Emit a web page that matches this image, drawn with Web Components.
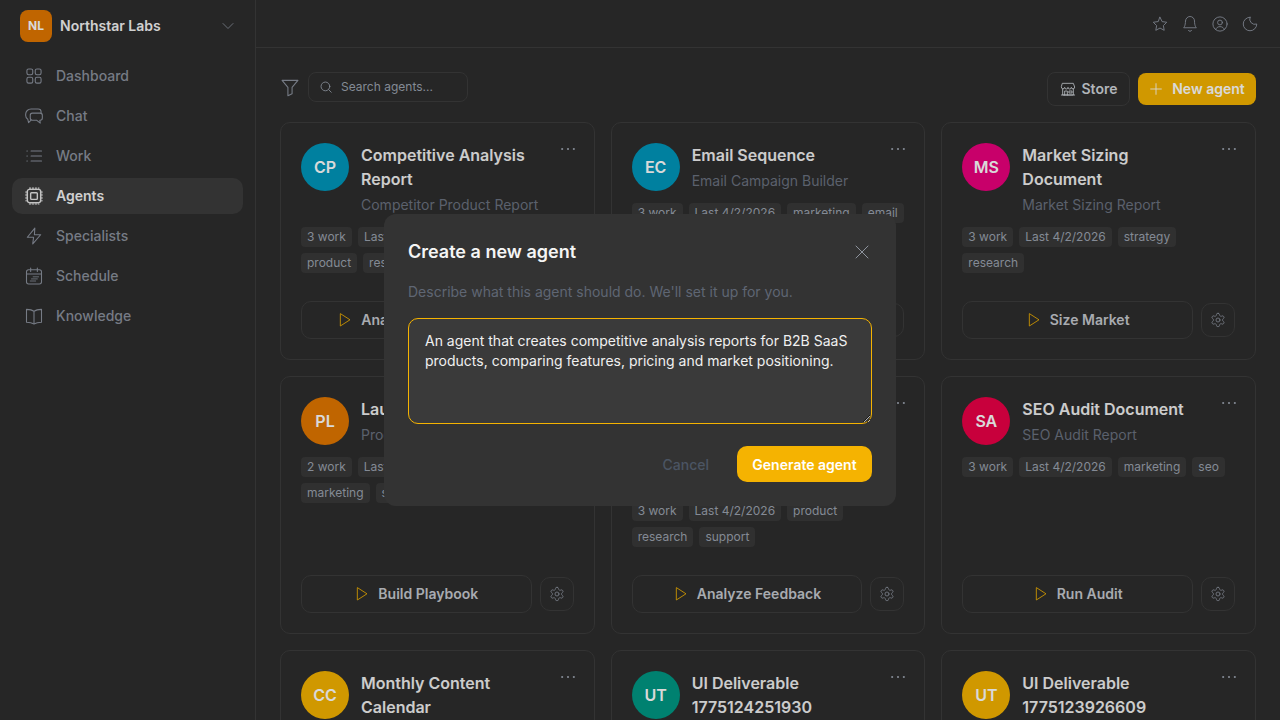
<!DOCTYPE html>
<html lang="en">
<head>
<meta charset="utf-8">
<title>Agents</title>
<style>
  html, body { margin: 0; height: 100%; background: #2d2d2d; overflow: hidden; }
  body { font-family: Inter, "Noto Sans", sans-serif; }
</style>
</head>
<body>
<app-shell>
  <side-nav slot="nav"></side-nav>
  <top-bar slot="top"></top-bar>
  <agents-toolbar slot="main"></agents-toolbar>
  <agents-grid slot="main">
    <agent-card initials="CP" color="#0097bb" name="Competitive Analysis Report" sub="Competitor Product Report" tags="3 work|Last 4/2/2026|analysis|product|research" action="Analyze Competitor"></agent-card>
    <agent-card initials="EC" color="#0097bb" name="Email Sequence" sub="Email Campaign Builder" tags="3 work|Last 4/2/2026|marketing|email" action="Build Sequence"></agent-card>
    <agent-card initials="MS" color="#eb007d" name="Market Sizing Document" sub="Market Sizing Report" tags="3 work|Last 4/2/2026|strategy|research" action="Size Market"></agent-card>
    <agent-card initials="PL" color="#e27700" name="Launch Playbook" sub="Product Launch Playbook" tags="2 work|Last 4/2/2026|product|marketing|strategy" action="Build Playbook"></agent-card>
    <agent-card initials="CF" color="#0097bb" name="Customer Feedback Analysis" sub="Customer Feedback Insights Summary Report" tags="3 work|Last 4/2/2026|product|research|support" action="Analyze Feedback"></agent-card>
    <agent-card initials="SA" color="#eb0047" name="SEO Audit Document" sub="SEO Audit Report" tags="3 work|Last 4/2/2026|marketing|seo" action="Run Audit"></agent-card>
    <agent-card initials="CC" color="#f5b301" name="Monthly Content Calendar" sub="Content Calendar" tags="3 work" action="Plan Month"></agent-card>
    <agent-card initials="UT" color="#009884" name="UI Deliverable 1775124251930" sub="UI Deliverable" tags="1 work" action="Run"></agent-card>
    <agent-card initials="UT" color="#f5b301" name="UI Deliverable 1775123926609" sub="UI Deliverable" tags="1 work" action="Run"></agent-card>
  </agents-grid>
</app-shell>
<create-agent-dialog></create-agent-dialog>

<script>
const ICONS = {
  dashboard: '<rect x="3.500" y="3.500" width="7" height="7" rx="2"/><rect x="13.500" y="3.500" width="7" height="7" rx="2"/><rect x="3.500" y="13.500" width="7" height="7" rx="2"/><rect x="13.500" y="13.500" width="7" height="7" rx="2"/>',
  chat: '<path d="M20.500 8.500V7A3.500 3.500 0 0 0 17 3.500H8.500A6.500 6.500 0 0 0 2 10v1.500c0 2 1 3.500 2.500 4.300L5.500 20l3-3"/><path d="M10 8.500h9.500a2.500 2.500 0 0 1 2.500 2.500v3.500a2.500 2.500 0 0 1-2.500 2.500H19l.5 3.500-4.500-3.500h-5a2.500 2.500 0 0 1-2.500-2.500V11A2.500 2.500 0 0 1 10 8.500z"/>',
  list: '<path d="M8.500 6H21M8.500 12H21M8.500 18H21M3.500 6h.5M3.500 12h.5M3.500 18h.5"/>',
  chip: '<rect x="4" y="4" width="16" height="16" rx="2.500" stroke-width="1.700"/><rect x="8" y="8" width="8" height="8" rx="1" stroke-width="1.700"/><path stroke-dasharray="1.500 2" d="M6.500 2.500H18M6.500 21.500H18M2.500 6.500V18M21.500 6.500V18"/>',
  zap: '<path d="M13 2.500 4 13.500h7.500L10.500 21.500 20 10.500h-7.500z"/>',
  calendar: '<rect x="3" y="4.500" width="18" height="17" rx="2.500"/><path d="M3 9.500h18M8 2.500v4M16 2.500v4"/><path stroke-width="1" d="M11 13h6.500M9 15.500h7M7.500 18h6.500"/>',
  book: '<path d="M12 6.500C10 4.800 7 4 3 4v15.500c4 0 7 .8 9 2 2-1.200 5-2 9-2V4c-4 0-7 .8-9 2.500zM12 6.500v15"/>',
  chevron: '<path d="m6 9 6 6 6-6"/>',
  star: '<path d="m12 3 2.800 5.800 6.200.9-4.500 4.400 1.100 6.300L12 17.400l-5.600 3 1.100-6.300L3 9.700l6.200-.9z"/>',
  bell: '<path d="M6 8a6 6 0 0 1 12 0c0 7 2.500 9 2.500 9h-17S6 15 6 8"/><path d="M10 20.500a2.200 2.200 0 0 0 4 0"/>',
  user: '<circle cx="12" cy="12" r="9.500"/><circle cx="12" cy="10" r="3.200"/><path d="M6.200 19.500c.8-2.600 3-4 5.800-4s5 1.400 5.800 4"/>',
  moon: '<path d="M12 3a7 7 0 0 0 9 9 9 9 0 1 1-9-9z"/>',
  filter: '<path d="M2.500 4h19l-7 8.500V20l-5 2.500v-10z"/>',
  search: '<circle cx="11" cy="11" r="7.500"/><path d="m21 21-4.500-4.500"/>',
  store: '<path d="M4 3.500h16l2 5.500a2.500 2.500 0 0 1-5 .5 2.500 2.500 0 0 1-5 0 2.500 2.500 0 0 1-5 0 2.500 2.500 0 0 1-5-.5z"/><path d="M4 12v9h16v-9M2 21h20"/><path d="M7 21v-6h4v6M14 15h4v3h-4z"/>',
  plus: '<path d="M12 4v16M4 12h16"/>',
  play: '<path d="M5 3v18l14-9z"/>',
  gear: '<path d="M12.220 2h-.44a2 2 0 0 0-2 2v.18a2 2 0 0 1-1 1.730l-.43.25a2 2 0 0 1-2 0l-.15-.08a2 2 0 0 0-2.730.73l-.22.38a2 2 0 0 0 .73 2.730l.15.1a2 2 0 0 1 1 1.720v.51a2 2 0 0 1-1 1.740l-.15.09a2 2 0 0 0-.73 2.730l.22.38a2 2 0 0 0 2.730.73l.15-.08a2 2 0 0 1 2 0l.43.25a2 2 0 0 1 1 1.730V20a2 2 0 0 0 2 2h.44a2 2 0 0 0 2-2v-.18a2 2 0 0 1 1-1.730l.43-.25a2 2 0 0 1 2 0l.15.08a2 2 0 0 0 2.730-.73l.22-.39a2 2 0 0 0-.73-2.730l-.15-.08a2 2 0 0 1-1-1.740v-.5a2 2 0 0 1 1-1.740l.15-.09a2 2 0 0 0 .73-2.730l-.22-.38a2 2 0 0 0-2.730-.73l-.15.08a2 2 0 0 1-2 0l-.43-.25a2 2 0 0 1-1-1.730V4a2 2 0 0 0-2-2z"/><circle cx="12" cy="12" r="3"/>',
  close: '<path d="M3 3l18 18M21 3 3 21"/>',
  dots: '<circle cx="5" cy="12" r="1.300" fill="currentColor" stroke="none"/><circle cx="12" cy="12" r="1.300" fill="currentColor" stroke="none"/><circle cx="19" cy="12" r="1.300" fill="currentColor" stroke="none"/>'
};

class NsIcon extends HTMLElement {
  connectedCallback() {
    const size = this.getAttribute("size") || 16;
    const sw = this.getAttribute("stroke") || 1.5;
    this.attachShadow({ mode: "open" }).innerHTML = `
      <style>:host { display: inline-flex; flex: none; } svg { display: block; }</style>
      <svg width="${size}" height="${size}" viewBox="0 0 24 24" fill="none" stroke="currentColor"
        stroke-width="${sw}" stroke-linecap="round" stroke-linejoin="round">${ICONS[this.getAttribute("name")]}</svg>`;
  }
}
customElements.define("ns-icon", NsIcon);

class AppShell extends HTMLElement {
  constructor() {
    super();
    this.attachShadow({ mode: "open" }).innerHTML = `
      <style>
        :host { display: grid; grid-template-columns: 256px 1fr; height: 720px; overflow: hidden; }
        .col { display: flex; flex-direction: column; min-width: 0; height: 720px; overflow: hidden; }
        main { padding: 24px; display: flex; flex-direction: column; gap: 16px; }
      </style>
      <slot name="nav"></slot>
      <div class="col">
        <slot name="top"></slot>
        <main><slot name="main"></slot></main>
      </div>`;
  }
}
customElements.define("app-shell", AppShell);

class NavItem extends HTMLElement {
  connectedCallback() {
    const active = this.hasAttribute("active");
    this.attachShadow({ mode: "open" }).innerHTML = `
      <style>
        :host { display: flex; align-items: center; gap: 12px; height: 36px; padding: 0 12px; border-radius: 10px;
          font-size: 14px; line-height: 20px; font-weight: 500; color: #8b919d; }
        :host([active]) { background: #3c3c3c; color: #f5f5f5; font-weight: 600; }
        ns-icon { color: ${active ? "#e5e5e5" : "#8b919d"}; }
      </style>
      <ns-icon name="${this.getAttribute("icon")}" size="20" stroke="1.300"></ns-icon>
      <slot></slot>`;
  }
}
customElements.define("nav-item", NavItem);

class SideNav extends HTMLElement {
  connectedCallback() {
    this.attachShadow({ mode: "open" }).innerHTML = `
      <style>
        :host { display: block; height: 720px; border-right: 1px solid #3c3c3c; box-sizing: border-box; padding: 10px 12px 0; }
        header { display: flex; align-items: center; gap: 8px; height: 32px; padding: 0 8px; margin-bottom: 16px; line-height: 20px; }
        .logo { width: 32px; height: 32px; border-radius: 8px; background: #e27700; color: #fff;
          display: flex; align-items: center; justify-content: center; font-size: 12px; font-weight: 700; }
        .org { flex: 1; color: #f5f5f5; font-size: 14px; font-weight: 600; }
        header ns-icon { color: #8b919d; margin-right: -3px; }
        nav { display: flex; flex-direction: column; gap: 4px; }
      </style>
      <header>
        <div class="logo">NL</div>
        <div class="org">Northstar Labs</div>
        <ns-icon name="chevron" size="20" stroke="1"></ns-icon>
      </header>
      <nav>
        <nav-item icon="dashboard">Dashboard</nav-item>
        <nav-item icon="chat">Chat</nav-item>
        <nav-item icon="list">Work</nav-item>
        <nav-item icon="chip" active>Agents</nav-item>
        <nav-item icon="zap">Specialists</nav-item>
        <nav-item icon="calendar">Schedule</nav-item>
        <nav-item icon="book">Knowledge</nav-item>
      </nav>`;
  }
}
customElements.define("side-nav", SideNav);

class TopBar extends HTMLElement {
  connectedCallback() {
    const items = ["star", "bell", "user", "moon"]
      .map(n => `<span><ns-icon name="${n}" size="18" stroke="1.250"></ns-icon></span>`).join("");
    this.attachShadow({ mode: "open" }).innerHTML = `
      <style>
        :host { display: flex; flex: none; justify-content: flex-end; align-items: center; height: 48px; box-sizing: border-box;
          border-bottom: 1px solid #3c3c3c; padding: 0 15px; color: #8b919d; }
        span { width: 30px; height: 30px; display: flex; align-items: center; justify-content: center; }
      </style>${items}`;
  }
}
customElements.define("top-bar", TopBar);

class AgentsToolbar extends HTMLElement {
  connectedCallback() {
    this.attachShadow({ mode: "open" }).innerHTML = `
      <style>
        :host { display: flex; align-items: center; gap: 8px; height: 34px; color: #8b919d; }
        .search { display: flex; align-items: center; gap: 8px; box-sizing: border-box; width: 160px; height: 30px; margin-top: -4px;
          padding: 0 10px; border: 1px solid #3c3c3c; border-radius: 8px; font-size: 12px; line-height: 16px; color: #9ca3af; }
        .filter { margin-top: -4px; width: 20px; display: flex; }
        .grow { flex: 1; }
        button { font: inherit; font-size: 14px; line-height: 20px; font-weight: 600; display: flex; align-items: center; gap: 6px; border-radius: 8px; }
        .store { height: 34px; width: 83px; box-sizing: border-box; justify-content: center; background: transparent;
          border: 1px solid #3c3c3c; color: #d1d5db; padding: 0; }
        .new { height: 32px; width: 118px; box-sizing: border-box; justify-content: center; gap: 8px; border: 0; background: #f5b301; color: #fff; padding: 0 1px 0 0; }
      </style>
      <span class="filter"><ns-icon name="filter" size="20" stroke="1.300"></ns-icon></span>
      <div class="search"><ns-icon name="search" size="14"></ns-icon>Search agents...</div>
      <div class="grow"></div>
      <button class="store"><ns-icon name="store" size="16" stroke="1.300"></ns-icon>Store</button>
      <button class="new"><ns-icon name="plus" size="16" stroke="1.300"></ns-icon>New agent</button>`;
  }
}
customElements.define("agents-toolbar", AgentsToolbar);

class AgentsGrid extends HTMLElement {
  constructor() {
    super();
    this.attachShadow({ mode: "open" }).innerHTML = `
      <style>:host { display: grid; grid-template-columns: repeat(3, 1fr); gap: 16px; }</style>
      <slot></slot>`;
  }
}
customElements.define("agents-grid", AgentsGrid);

class AgentCard extends HTMLElement {
  connectedCallback() {
    const a = n => this.getAttribute(n);
    const tags = a("tags").split("|").map(t => `<span>${t}</span>`).join("");
    this.attachShadow({ mode: "open" }).innerHTML = `
      <style>
        :host { display: flex; flex-direction: column; position: relative; box-sizing: border-box; padding: 20px;
          border: 1px solid #3c3c3c; border-radius: 10px; min-width: 0; }
        .menu { position: absolute; top: 16px; right: 16px; color: #9ca3af; display: flex; }
        .head { display: flex; gap: 12px; }
        .avatar { flex: none; width: 48px; height: 48px; border-radius: 50%; background: ${a("color")}; color: #fff;
          display: flex; align-items: center; justify-content: center; font-size: 16px; font-weight: 600; }
        .info { flex: 1; min-width: 0; padding-right: 32px; }
        .name { font-size: 16px; line-height: 24px; font-weight: 600; color: #f0f0f0; }
        .sub { font-size: 14px; line-height: 20px; color: #6b7280; margin-top: 4px; }
        .tags { display: flex; flex-wrap: wrap; gap: 6px; margin: 12px 0 28px; }
        .tags span { height: 20px; line-height: 20px; padding: 0 6px; border-radius: 4px; background: #393939; color: #9ca3af; font-size: 12px; }
        .actions { display: flex; align-items: center; gap: 8px; margin-top: auto; }
        .run { flex: 1; height: 38px; box-sizing: border-box; display: flex; align-items: center; justify-content: center; gap: 8px;
          border: 1px solid #3c3c3c; border-radius: 10px; font-size: 14px; line-height: 20px; font-weight: 600; color: #c6c9cf; }
        .run ns-icon { color: #f5b301; }
        .cfg { width: 34px; height: 34px; box-sizing: border-box; display: flex; align-items: center; justify-content: center;
          border: 1px solid #3c3c3c; border-radius: 10px; color: #8b919d; }
      </style>
      <span class="menu"><ns-icon name="dots" size="20"></ns-icon></span>
      <div class="head">
        <div class="avatar">${a("initials")}</div>
        <div class="info">
          <div class="name">${a("name")}</div>
          <div class="sub">${a("sub")}</div>
        </div>
      </div>
      <div class="tags">${tags}</div>
      <div class="actions">
        <div class="run"><ns-icon name="play" size="16" stroke="1.300"></ns-icon>${a("action")}</div>
        <div class="cfg"><ns-icon name="gear" size="16" stroke="1.300"></ns-icon></div>
      </div>`;
  }
}
customElements.define("agent-card", AgentCard);

class CreateAgentDialog extends HTMLElement {
  connectedCallback() {
    this.attachShadow({ mode: "open" }).innerHTML = `
      <style>
        :host { position: fixed; inset: 0; display: flex; align-items: flex-start; justify-content: center;
          background: rgba(0, 0, 0, .15); }
        .box { box-sizing: border-box; width: 512px; margin-top: 214px; padding: 24px; border-radius: 12px; background: #333333;
          display: flex; flex-direction: column; }
        .top { display: flex; align-items: center; justify-content: space-between; height: 28px; }
        h2 { margin: 0; font-size: 18px; line-height: 28px; font-weight: 600; color: #f5f5f5; }
        .top ns-icon { color: #9ca3af; margin-right: 2px; }
        p { margin: 16px 0; font-size: 14px; line-height: 20px; color: #5f6673; }
        textarea { display: block; box-sizing: border-box; width: 464px; height: 106px; padding: 12px 16px; margin: 0;
          border: 1px solid #f5b301; border-radius: 10px; outline: 0; background: #3a3a3a; color: #f0f0f0;
          font: 400 14px/20px Inter, sans-serif; resize: vertical; }
        .foot { display: flex; justify-content: flex-end; gap: 12px; margin-top: 22px; }
        button { height: 36px; padding: 0 16px; border: 0; border-radius: 10px; font: inherit; font-size: 14px; white-space: nowrap; }
        .cancel { background: transparent; color: #4b5563; font-weight: 500; }
        .go { width: 135px; padding: 0; background: #f5b301; color: #fff; font-weight: 600; }
      </style>
      <div class="box">
        <div class="top"><h2>Create a new agent</h2><ns-icon name="close" size="16" stroke="1.300"></ns-icon></div>
        <p>Describe what this agent should do. We'll set it up for you.</p>
        <textarea>An agent that creates competitive analysis reports for B2B SaaS products, comparing features, pricing and market positioning.</textarea>
        <div class="foot"><button class="cancel">Cancel</button><button class="go">Generate agent</button></div>
      </div>`;
  }
}
customElements.define("create-agent-dialog", CreateAgentDialog);
</script>
</body>
</html>
